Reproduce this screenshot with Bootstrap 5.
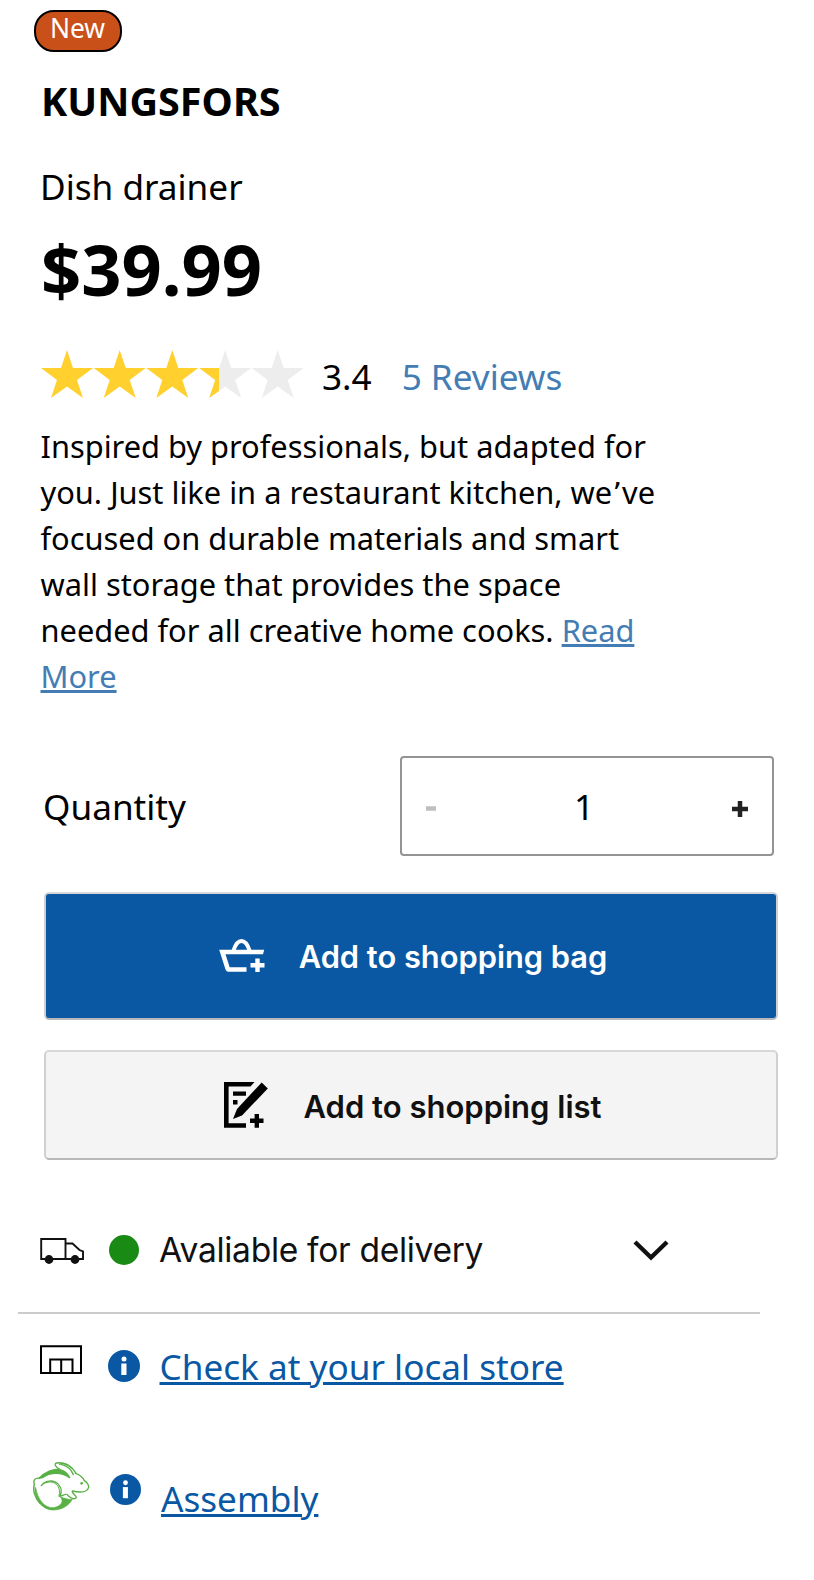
<!DOCTYPE html>
<html lang="en">
<head>
<meta charset="utf-8">
<meta name="viewport" content="width=device-width, initial-scale=1">
<title>KUNGSFORS Dish drainer</title>
<link rel="stylesheet" href="https://cdn.jsdelivr.net/npm/bootstrap@5.3.0/dist/css/bootstrap.min.css">
<style>
  body { font-family: "Noto Sans", sans-serif; color: #000; background: #fff; }
  svg { display: block; flex: none; }
  .product { padding: 10px 36px 0 40px; }
  .tag-new { width: 88px; height: 42px; margin-left: -6px; padding: 0 1px 5px 0; border: 2px solid #000; border-radius: 20px; background: #ca5019; color: #fff; font-size: 26.4px; line-height: 1; }
  .product-name { margin: 21px 0 0 1px; font-size: 39.6px; line-height: 56px; font-weight: 700; }
  .product-type { margin-top: 32px; font-size: 35.15px; line-height: 50px; }
  .product-price { margin: 11px 0 0 1px; font-size: 70.4px; line-height: 94px; font-weight: 700; }
  .rating { height: 52px; margin-top: 36px; font-size: 35.15px; line-height: 49px; }
  .rating svg { margin-top: -3px; }
  .soft-link { color: #437db3; }
  .ikea-link { color: #0a58a3; }
  .description { width: 630px; margin: 19px 0 0 .5px; font-size: 30.8px; line-height: 46px; }
  .apos { font-family: "DejaVu Sans", sans-serif; line-height: 1; }
  .quantity { margin: 57px 4px 0 3px; font-size: 35.15px; }
  .stepper { width: 374px; height: 100px; padding: 0 24px; border: 2px solid #949494; border-radius: 4px; }
  .stepper button { border: 0; background: none; padding: 0; }
  .action { height: 110px; border: 2px solid; border-color: #d8d8d8 #d0d0d0 #b8b8b8; border-radius: 5px; font-family: Inter, sans-serif; font-weight: 600; font-size: 31px; margin-left: 4px; width: 734px; padding: 0 0 0 2px; }
  .action span { margin-top: 2px; }
  .action-bag { height: 128px; margin-top: 36px; padding-left: 4px; background: #0a58a3; color: #fff; font-size: 30.8px; }
  .action-list { margin-top: 30px; background: #f4f4f4; color: #111; }
  .action-list span { margin-top: 4px; }
  .info-row { font-size: 35.15px; line-height: 50px; }
  .delivery { height: 154px; margin: 0 18px 0 -22px; padding: 28px 91px 0 21px; border-bottom: 2px solid #ccc; }
  .delivery-text { font-family: Inter, sans-serif; font-size: 33.6px; letter-spacing: -.32px; color: #111; }
</style>
</head>
<body>
<main class="product">
  <div class="tag-new d-flex align-items-center justify-content-center">New</div>
  <h1 class="product-name">KUNGSFORS</h1>
  <div class="product-type">Dish drainer</div>
  <div class="product-price">$39.99</div>

  <div class="rating d-flex">
    <svg width="264" height="50" viewBox="40 350 264 50">
      <defs>
        <path id="star" d="M67 351l6 18h20l-16 12 6 18-16-11.500-16 11.500 6-18-16-12h20z"/>
        <clipPath id="cut"><rect x="40" y="350" width="179" height="50"/></clipPath>
      </defs>
      <g fill="#ffd02e"><use href="#star"/><use href="#star" x="52.700"/><use href="#star" x="105.300"/></g>
      <use href="#star" x="158.200" fill="#ededed"/><use href="#star" x="210.700" fill="#ededed"/>
      <g clip-path="url(#cut)"><use href="#star" x="158.200" fill="#ffd02e"/></g>
    </svg>
    <span style="margin-left:18px">3.4</span>
    <a href="#" class="soft-link text-decoration-none" style="margin-left:30px">5 Reviews</a>
  </div>

  <p class="description">Inspired by professionals, but adapted for you. Just like in a restaurant kitchen, we<span class="apos">’</span>ve focused on durable materials and smart wall storage that provides the space needed for all creative home cooks. <a href="#" class="soft-link">Read More</a></p>

  <div class="quantity d-flex align-items-center justify-content-between">
    <span>Quantity</span>
    <div class="stepper d-flex align-items-center justify-content-between">
      <button type="button" aria-label="Decrease"><svg width="10" height="16" viewBox="0 0 10 16"><path d="M0 10.500h10" stroke="#bfbfbf" stroke-width="4.500"/></svg></button>
      <span>1</span>
      <button type="button" aria-label="Increase"><svg width="16" height="22" viewBox="0 0 16 22"><path d="M0 14h16M8 6v16" stroke="#222" stroke-width="4.500"/></svg></button>
    </div>
  </div>

  <button type="button" class="action action-bag d-flex align-items-center justify-content-center">
    <svg width="46" height="34" viewBox="218.500 938.500 46 34" fill="none" stroke="#fff">
      <path d="M233 950q3-9.500 8-9.500t8 9.500" stroke-width="4"/>
      <path d="M218.700 949.300H263.700L262.500 953.700H225L229.200 966.800H246V971.200H228Q225.800 971.200 225 969z" fill="#fff" stroke="none"/>
      <path d="M250 964.700h14M257 958v13.500" stroke-width="4.400"/>
    </svg>
    <span style="margin-left:34px">Add to shopping bag</span>
  </button>
  <button type="button" class="action action-list d-flex align-items-center justify-content-center">
    <svg width="46" height="48" viewBox="223 1081 46 48">
      <path d="M224 1082H254.500L250.500 1086.600H228.600V1123.200H246V1127.800H224zM233 1091.500h13v4.300h-13zM233 1100h4.500v4.600h-4.500z"/>
      <path d="M261.700 1082.500L267.800 1088.500L242 1115.500L233 1119L237 1109z"/>
      <path d="M250 1120.800h13.500M256.800 1114v13.800" stroke="#000" stroke-width="4.400"/>
    </svg>
    <span style="margin-left:35px">Add to shopping list</span>
  </button>

  <section class="info-row delivery d-flex align-items-center">
    <svg width="46" height="30" viewBox="39 1236 46 30" fill="none" stroke="#111" stroke-width="1.900">
      <path d="M41.200 1240H65.500V1260H41.200zM65.500 1244.500H72.500L79.500 1251L83 1252.500V1260H65.500"/>
      <g fill="#111" stroke="none"><circle cx="49" cy="1260.500" r="4.400"/><circle cx="75" cy="1260.500" r="4.400"/></g>
    </svg>
    <svg width="30" height="30" viewBox="0 0 30 30" style="margin-left:24px"><circle cx="15" cy="15" r="15" fill="#198a13"/></svg>
    <span class="delivery-text" style="margin-left:20px">Avaliable for delivery</span>
    <svg class="ms-auto" width="36" height="22" viewBox="0 0 36 22"><path d="M2 3L18 18.500L34 3" fill="none" stroke="#111" stroke-width="4.400"/></svg>
  </section>

  <section class="info-row d-flex" style="padding-top:27px">
    <svg width="42" height="30" viewBox="40 1345 42 30" style="margin-top:4px" fill="none" stroke="#000" stroke-width="2">
      <path d="M41 1346.200H81V1373H41zM50.200 1373V1359.500H72.500V1373M61.200 1359.500V1373"/>
    </svg>
    <svg width="32" height="32" viewBox="0 0 32 32" style="margin:9px 0 0 26px"><circle cx="16" cy="16" r="16" fill="#0a58a3"/><circle cx="16" cy="9" r="2.500" fill="#fff"/><path d="M13.300 13.500h5.200V25h-5.200z" fill="#fff"/></svg>
    <a href="#" class="ikea-link" style="margin-left:19.500px">Check at your local store</a>
  </section>

  <section class="info-row d-flex" style="margin:70px 0 0 -8px">
    <svg width="58" height="52" viewBox="36 32 174 156" fill="none" stroke="#59b044" stroke-width="4" stroke-linecap="round" stroke-linejoin="round">
      <path d="M119 57C106 50 101 40 110 38C128 34 156 46 168 69"/>
      <path d="M124 42C140 46 154 58 160 73"/>
      <path d="M119 42C130 36 145 40 155 53"/>
      <path d="M166 69C180 73 188 80 193 91C200 96 207 103 206 111C202 125 184 128 157 122C154 129 170 135 169 142C164 149 149 144 141 132"/>
      <path d="M57 84C75 65 100 54 120 58C132 60 142 68 149 82C128 66 93 63 67 82Q62 83 57 84" fill="#59b044"/>
      <path d="M57 84C47 81 38 90 43 101C37 120 45 145 61 160"/>
      <path d="M45 112C43 145 65 179 100 179C129 179 148 163 157 147C145 149 130 142 121 140C133 151 124 168 101 172C75 174 53 149 47 112" fill="#59b044" stroke-width="2"/>
      <path d="M64 106C74 91 100 86 115 102C125 113 126 127 118 138C134 135 126 134 138 132"/>
      <path d="M66 104C80 90 103 93 113 106C119 115 120 125 117 137" stroke-width="3"/>
      <circle cx="185" cy="99" r="4" fill="#59b044" stroke="none"/>
    </svg>
    <svg width="31" height="31" viewBox="0 0 32 32" style="margin:13px 0 0 20px"><circle cx="16" cy="16" r="16" fill="#0a58a3"/><circle cx="16" cy="9" r="2.500" fill="#fff"/><path d="M13.300 13.500h5.200V25h-5.200z" fill="#fff"/></svg>
    <a href="#" class="ikea-link" style="margin:12px 0 0 20px">Assembly</a>
  </section>
</main>
<script src="https://cdn.jsdelivr.net/npm/bootstrap@5.3.0/dist/js/bootstrap.bundle.min.js"></script>
</body>
</html>
